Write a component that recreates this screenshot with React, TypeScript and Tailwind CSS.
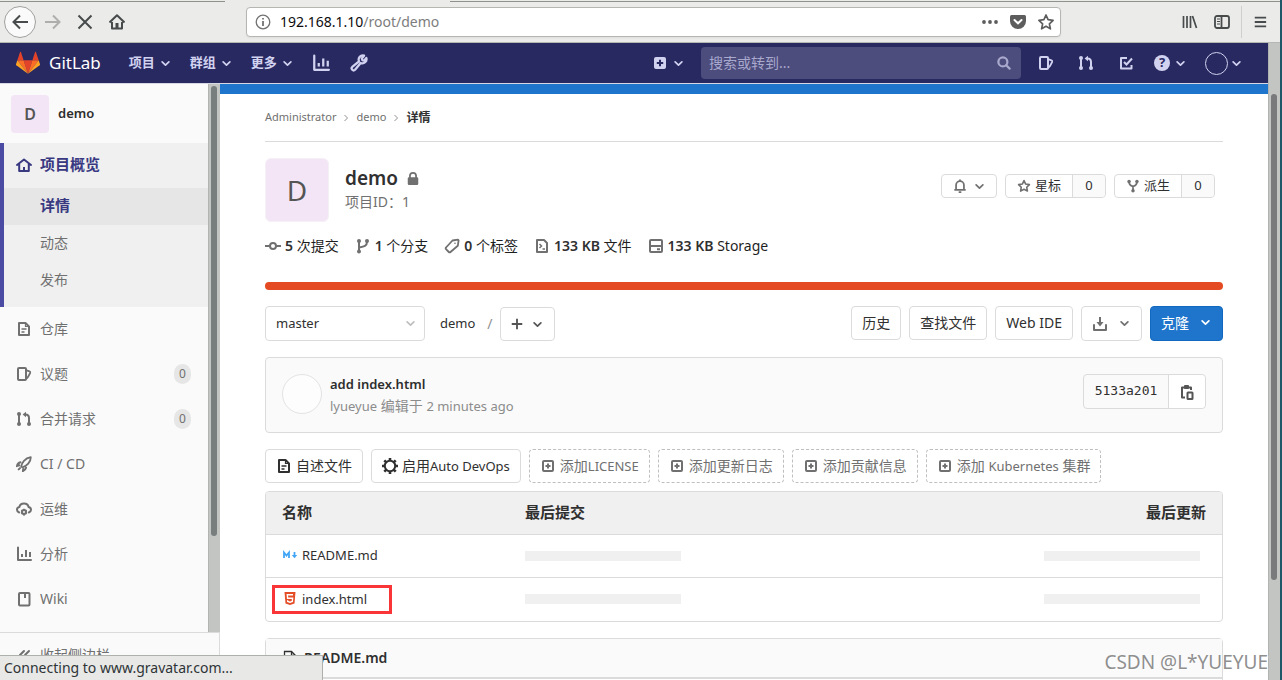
import React from "react";
import clsx from "clsx";

type IconProps = { className?: string };

const Svg = ({
  className = "w-4 h-4",
  width = 2,
  children,
}: IconProps & { width?: number; children: React.ReactNode }) => (
  <svg
    viewBox="0 0 16 16"
    className={clsx("shrink-0", className)}
    fill="none"
    stroke="currentColor"
    strokeWidth={width}
    aria-hidden="true"
  >
    {children}
  </svg>
);

const Chevron = ({ className = "w-[9px] h-[9px]" }: IconProps) => (
  <Svg className={className} width={3}>
    <path d="M2 5l6 6 6-6" strokeLinecap="round" strokeLinejoin="round" />
  </Svg>
);

const ChevronRight = () => (
  <Svg className="w-2 h-2 text-[#919191]">
    <path d="M5 2l6 6-6 6" />
  </Svg>
);

const HomeIcon = ({ className }: IconProps) => (
  <Svg className={className}>
    <path d="M1 8l7-5.5L15 8M3.2 7v7h9.6V7" strokeLinecap="round" strokeLinejoin="round" />
    <path d="M8 10v4" />
  </Svg>
);

const DocIcon = ({ className }: IconProps) => (
  <Svg className={className}>
    <path d="M3 2h6.5L13 5.500V14H3z" strokeLinejoin="round" />
    <path d="M5.500 8h5M5.500 11h3" strokeWidth="1.6" />
    <path d="M9.500 2v3.500H13" strokeWidth="1.2" />
  </Svg>
);

const IssuesIcon = ({ className }: IconProps) => (
  <Svg className={className}>
    <rect x="2" y="2" width="8" height="12" rx="1" />
    <path d="M10 4.2l3.4 1.1c.7.3 1 .9.8 1.5L12 11l-2 2" strokeWidth="1.8" />
  </Svg>
);

const MergeIcon = ({ className }: IconProps) => (
  <Svg className={className}>
    <path d="M3 3v10M13 13V7c0-2.5-1.2-3.5-3.5-3.5" />
    <path d="M10 .8v5.4L6.6 3.5z" fill="currentColor" stroke="none" />
    <g fill="currentColor" stroke="none">
      <circle cx="3" cy="3" r="2" />
      <circle cx="3" cy="13" r="2" />
      <circle cx="13" cy="13" r="2" />
    </g>
  </Svg>
);

const RocketIcon = ({ className }: IconProps) => (
  <Svg className={className}>
    <path
      d="M5.2 10.8C5.5 6.500 9 2.200 14.800 1.200c0 4.800-4 9-8.500 10.100z"
      strokeWidth="1.8"
      strokeLinejoin="round"
    />
    <path d="M4.500 6.300C2.600 6.600 1.400 8 1 10l2.400-.7M10 11.700c-.4 1.800-1.500 2.700-3 3.300l.2-2M2.700 13.400l1.300-1.300" strokeLinecap="round" />
  </Svg>
);

const CloudGearIcon = ({ className }: IconProps) => (
  <Svg className={className}>
    <path
      d="M3.200 11.500C1.800 11 1 10 1 8.700c0-1.500 1-2.600 2.400-2.800C3.900 3.600 5.700 2.500 8 2.500s4.100 1.300 4.600 3.400C14 6.200 15 7.200 15 8.700c0 1.300-.8 2.300-2.200 2.800"
      strokeLinecap="round"
    />
    <circle cx="8" cy="11" r="2" />
    <path d="M8 7.800v1.200M8 13v1.700M5.200 9.400l1 .6M9.800 12l1 .6M5.200 12.600l1-.6M9.800 10l1-.6" strokeWidth="1.5" />
  </Svg>
);

const ChartIcon = ({ className }: IconProps) => (
  <Svg className={className}>
    <path d="M2 1.500V14h13" strokeLinecap="round" strokeLinejoin="round" />
    <path d="M6 8v3M10 4v7M14 6v5" />
  </Svg>
);

const BookIcon = ({ className }: IconProps) => (
  <Svg className={className}>
    <rect x="3" y="2" width="10.500" height="12.500" rx="1" />
    <path d="M9 2.500v4.500" />
  </Svg>
);

const CollapseIcon = () => (
  <Svg>
    <path d="M8 4L4 8l4 4M13 4L9 8l4 4" strokeLinecap="round" strokeLinejoin="round" />
  </Svg>
);

const BranchIcon = ({ className }: IconProps) => (
  <Svg className={className}>
    <path d="M4 3v10M12 4c0 4-3 4.500-8 5.500" />
    <g fill="currentColor" stroke="none">
      <circle cx="4" cy="3" r="2" />
      <circle cx="4" cy="13.500" r="2" />
      <circle cx="12" cy="3" r="2" />
    </g>
  </Svg>
);

const ForkIcon = ({ className }: IconProps) => (
  <Svg className={className}>
    <path d="M3.500 3c0 3.500 1.500 4.500 4.500 5.500 3-1 4.500-2 4.500-5.500M8 8v5" />
    <g fill="currentColor" stroke="none">
      <circle cx="3.500" cy="2.800" r="2" />
      <circle cx="12.500" cy="2.800" r="2" />
      <circle cx="8" cy="13.500" r="2" />
    </g>
  </Svg>
);

const StarIcon = ({ className }: IconProps) => (
  <Svg className={className} width={1.8}>
    <path
      d="M8 1.800l1.900 4 4.300.6-3.100 3 .8 4.400L8 11.700l-3.900 2.100.8-4.400-3.100-3 4.300-.6z"
      strokeLinejoin="round"
    />
  </Svg>
);

const PlusBox = ({ className }: IconProps) => (
  <Svg className={className}>
    <rect x="3" y="3" width="10" height="10" rx="1" />
    <path d="M8 5.500v5M5.500 8h5" />
  </Svg>
);

const GearIcon = () => (
  <Svg>
    <circle cx="8" cy="8" r="5.200" strokeWidth="2" />
    <path
      d="M8 0v3M8 13v3M0 8h3M13 8h3M2.300 2.300l2 2M11.700 11.700l2 2M2.300 13.700l2-2M11.700 4.300l2-2"
      strokeWidth="2.600"
    />
  </Svg>
);

const GitLabLogo = () => (
  <svg viewBox="0 0 36 34" className="w-6 h-6 shrink-0" aria-hidden="true">
    <path fill="#e24329" d="M18 33L11.400 12.700h13.200z" />
    <path fill="#fc6d26" d="M18 33l-6.600-20.300H2z" />
    <path fill="#fca326" d="M2 12.700L0 18.900a1.400 1.400 0 0 0 .5 1.500L18 33z" />
    <path fill="#e24329" d="M2 12.700h9.400L7.400.6a.7.7 0 0 0-1.300 0z" />
    <path fill="#fc6d26" d="M18 33l6.600-20.300H34z" />
    <path fill="#fca326" d="M34 12.700l2 6.200a1.400 1.400 0 0 1-.5 1.500L18 33z" />
    <path fill="#e24329" d="M34 12.700h-9.400l4-12.100a.7.7 0 0 1 1.300 0z" />
  </svg>
);

const BrowserBar = () => (
  <div className="shrink-0 bg-[#ebebea] border-b border-[#b5b7b3]">
    <div className="flex h-[2px]">
      <div className="w-[225px] border-b border-[#8f918d]" />
      <div className="w-[225px]" />
      <div className="flex-1 border-b border-[#8f918d]" />
    </div>
    <div className="flex h-10 items-center pl-1 text-[#474b4b]">
      <button aria-label="Back" className="flex size-8 items-center justify-center rounded-full border border-[#a0a09e] bg-[#fafafa]">
        <Svg>
          <path d="M8 1.500L1.500 8 8 14.500M2 8h14" />
        </Svg>
      </button>
      <button aria-label="Forward" className="ml-[9px] text-[#aeaeac]">
        <Svg>
          <path d="M8 1.500L14.500 8 8 14.500M14 8H0" />
        </Svg>
      </button>
      <button aria-label="Stop" className="ml-4">
        <Svg>
          <path d="M1.500 1.500l13 13M14.500 1.500l-13 13" />
        </Svg>
      </button>
      <button aria-label="Home" className="ml-4">
        <Svg>
          <path d="M.500 8.500L8 1.200l7.500 7.300M3 8v6.500h10V8" strokeLinejoin="round" />
          <path d="M8 9v5" strokeWidth="3" />
        </Svg>
      </button>
      <div className="ml-[121px] flex h-[30px] flex-1 items-center rounded-sm border border-[#b5b5b2] bg-white pl-2 pr-1.5 shadow-xs">
        <Svg className="w-4 h-4 text-[#727272]" width={1.3}>
          <circle cx="8" cy="8" r="6.800" />
          <path d="M8 7v5M8 4v1.500" strokeWidth="1.800" />
        </Svg>
        <p className="ml-[9px] flex-1 text-sm text-[#7d7d7d]">
          <span className="text-[#0c0c0d]">192.168.1.10</span>/root/demo
        </p>
        <div className="flex items-center gap-3 text-[#5d5d5d]">
          <Svg>
            <g fill="currentColor" stroke="none">
              <circle cx="2" cy="8" r="1.900" />
              <circle cx="8" cy="8" r="1.900" />
              <circle cx="14" cy="8" r="1.900" />
            </g>
          </Svg>
          <Svg>
            <path d="M1.500 1h13q1.500 0 1.500 1.500V7a8 8 0 0 1-16 0V2.500Q0 1 1.500 1z" fill="currentColor" stroke="none" />
            <path d="M4.500 6L8 9.300 11.500 6" stroke="#fff" strokeLinecap="round" />
          </Svg>
          <Svg width={1.700}>
            <path d="M8 1l2.100 4.700 5 .6-3.700 3.500 1 5L8 12.300l-4.400 2.500 1-5L.9 6.300l5-.6z" strokeLinejoin="round" />
          </Svg>
        </div>
      </div>
      <div className="ml-[121px] flex items-center gap-4">
        <Svg>
          <path d="M1.500 2v12M5 2v12M8.500 2v12M10.500 2l4 12" strokeWidth="1.700" />
        </Svg>
        <Svg width={1.800}>
          <rect x="1" y="2" width="14" height="12" rx="2" />
          <path d="M7.500 2v12" />
          <path d="M3 5h3M3 7.500h3M3 10h3" strokeWidth="1" />
        </Svg>
      </div>
      <div className="ml-[11px] h-8 border-l border-[#cfcfcd]" />
      <button aria-label="Menu" className="ml-[11px] mr-[13px]">
        <Svg className="w-3.5 h-3.5" width={2.200}>
          <path d="M2 3h13M2 8h13M2 13h13" />
        </Svg>
      </button>
    </div>
  </div>
);

const Navbar = () => (
  <header className="flex h-[41px] shrink-0 items-center border-b border-[#d8d8e4] bg-[#292961] pl-4 pr-[27px] text-[#d1d1f0]">
    <a href="#" className="flex items-center gap-[9px] text-[17px] text-white">
      <GitLabLogo />
      GitLab
    </a>
    <nav className="ml-7 flex items-center gap-5 text-[13px] font-bold">
      {["项目", "群组", "更多"].map((label) => (
        <button key={label} className="flex items-center gap-1.5">
          {label}
          <Chevron />
        </button>
      ))}
      <a href="#" aria-label="分析">
        <ChartIcon className="w-[18px] h-[18px]" />
      </a>
      <a href="#" aria-label="管理">
        <Svg className="w-[18px] h-[18px]">
          <path
            d="M14.500 3.500a3.700 3.700 0 0 1-5 4.500L4.500 14a1.600 1.600 0 0 1-2.500-2.500L8 6.500a3.700 3.700 0 0 1 4.500-5L10.500 4l.5 1.500 1.500.5z"
            strokeLinejoin="round"
          />
        </Svg>
      </a>
    </nav>
    <button aria-label="新建" className="ml-auto mr-[18px] flex items-center gap-1.5">
      <Svg>
        <rect x="2" y="2" width="12" height="12" rx="2" fill="currentColor" stroke="none" />
        <path d="M8 4.800v6.400M4.800 8h6.400" stroke="#292961" />
      </Svg>
      <Chevron />
    </button>
    <div className="flex h-8 w-80 items-center rounded bg-[#4c4c7d] px-2">
      <input
        aria-label="搜索或转到..."
        placeholder="搜索或转到..."
        className="min-w-0 flex-1 bg-transparent text-sm placeholder:text-[#a9a9cd]"
      />
      <Svg className="w-[18px] h-[18px] text-[#a9a9cd]">
        <circle cx="7" cy="7" r="4" />
        <path d="M10 10l3 3" strokeLinecap="round" />
      </Svg>
    </div>
    <div className="ml-[17px] flex items-center gap-6">
      <IssuesIcon />
      <MergeIcon />
      <Svg>
        <path d="M9 3H3v10.500h10.500V10" strokeLinejoin="round" />
        <path d="M6 7l2.500 2.500L14 3.500" />
      </Svg>
    </div>
    <button aria-label="帮助" className="ml-5 flex items-center gap-1.5">
      <span className="flex size-4 items-center justify-center rounded-full bg-[#d1d1f0] text-[13px] font-bold text-[#292961]">
        ?
      </span>
      <Chevron />
    </button>
    <button aria-label="用户" className="ml-5 flex items-center gap-1">
      <span className="size-[23px] rounded-full border border-[#d1d1f0]" />
      <Chevron />
    </button>
  </header>
);

const sideItems = [
  { label: "仓库", Icon: DocIcon },
  { label: "议题", Icon: IssuesIcon, count: 0 },
  { label: "合并请求", Icon: MergeIcon, count: 0 },
  { label: "CI / CD", Icon: RocketIcon },
  { label: "运维", Icon: CloudGearIcon },
  { label: "分析", Icon: ChartIcon },
  { label: "Wiki", Icon: BookIcon },
];

const Sidebar = () => (
  <aside className="flex w-[220px] shrink-0 flex-col text-sm text-[#707070]">
    <div className="flex min-h-0 flex-1">
      <div className="min-w-0 flex-1 overflow-hidden bg-[#fafafa]">
        <a href="#" className="flex h-[59px] items-center gap-[9px] pl-[11px] text-[13px] font-semibold text-[#2e2e2e]">
          <span className="flex size-[38px] items-center justify-center rounded-sm bg-[#f3e5f5] text-base text-[#555]">
            D
          </span>
          demo
        </a>
        <nav>
          <div className="border-l-4 border-[#4b4ba3] bg-[#f0f0f0] pb-2">
            <a href="#" className="flex h-11 items-center gap-2 pl-3 text-[15px] font-bold text-[#393982]">
              <HomeIcon />
              项目概览
            </a>
            <a href="#" className="mt-px flex h-[37px] items-center bg-[#e6e6e6] pb-0.5 pl-9 text-[15px] font-bold text-[#393982]">
              详情
            </a>
            <a href="#" className="flex h-[37px] items-center pb-0.5 pl-9">动态</a>
            <a href="#" className="flex h-[37px] items-center pb-0.5 pl-9">发布</a>
          </div>
          {sideItems.map(({ label, Icon, count }) => (
            <a key={label} href="#" className="flex h-[45px] items-center gap-2 pb-0.5 pl-4 pr-[17px]">
              <Icon />
              <span className="flex-1">{label}</span>
              {count !== undefined && (
                <span className="flex h-5 w-[17px] items-center justify-center rounded-full bg-[#e6e6e6] text-xs">
                  {count}
                </span>
              )}
            </a>
          ))}
        </nav>
      </div>
      <div className="w-3 border-l border-[#b2b4b2] bg-[#c3c5c3] pl-0.5 pt-0.5">
        <div className="h-[450px] w-1.5 rounded-full bg-[#787d7d]" />
      </div>
    </div>
    <button className="flex h-12 shrink-0 items-center gap-2 border-r border-t border-[#dbdbdb] bg-[#fafafa] pb-1 pl-4">
      <CollapseIcon />
      收起侧边栏
    </button>
  </aside>
);

const countBox = "flex w-[33px] items-center justify-center rounded-r border-l border-[#dbdbdb] bg-[#fafafa]";

const ProjectHeader = () => (
  <div className="mt-4 flex items-start">
    <div className="flex size-16 items-center justify-center rounded-md border border-[#f5f0f6] bg-[#f3e5f5] text-[28px] text-[#555]">
      D
    </div>
    <div className="ml-4 pt-1.5">
      <h1 className="flex items-center gap-2 text-[19px] leading-7 font-semibold text-[#303030]">
        demo
        <Svg className="w-3.5 h-3.5 text-[#707070]">
          <rect x="2" y="7" width="12" height="9" rx="1.500" fill="currentColor" stroke="none" />
          <path d="M4.500 8V5.500a3.500 3.500 0 0 1 7 0V8" />
        </Svg>
      </h1>
      <p className="text-sm text-[#707070]">项目ID：1</p>
    </div>
    <div className="ml-auto mr-2 mt-4 flex gap-2 text-[13px] text-[#303030]">
      <button aria-label="通知" className="flex h-6 w-14 items-center justify-center gap-2 rounded border border-[#dbdbdb] text-[#707070]">
        <Svg className="w-3.5 h-3.5">
          <path d="M1.500 12.500h13M3.500 12V7a4.500 4.500 0 0 1 9 0v5M8 .5V2" />
          <path d="M6.500 15h3" />
        </Svg>
        <Chevron />
      </button>
      <div className="flex h-6 rounded border border-[#dbdbdb]">
        <button className="flex items-center gap-1 pl-[11px] pr-[11px]">
          <StarIcon className="w-3.5 h-3.5 text-[#707070]" />
          星标
        </button>
        <a href="#" className={countBox}>0</a>
      </div>
      <div className="flex h-6 rounded border border-[#dbdbdb]">
        <button className="flex items-center gap-1 pl-[11px] pr-[11px]">
          <ForkIcon className="w-3.5 h-3.5 text-[#707070]" />
          派生
        </button>
        <a href="#" className={countBox}>0</a>
      </div>
    </div>
  </div>
);

const CommitIcon = () => (
  <Svg>
    <circle cx="8" cy="8" r="3" />
    <path d="M0 8h5M11 8h5" />
  </Svg>
);

const TagIcon = () => (
  <Svg width={1.800}>
    <path d="M8.500 2.500l5.500-.8.600.6-.8 5.500L6.500 14a1.200 1.200 0 0 1-1.700 0L2 11.200a1.200 1.200 0 0 1 0-1.700z" strokeLinejoin="round" />
    <circle cx="11" cy="5.200" r=".8" fill="currentColor" stroke="none" />
  </Svg>
);

const CodeDocIcon = () => (
  <Svg>
    <path d="M3 2h7l3 3v9H3z" strokeLinejoin="round" />
    <path d="M5.500 6L7.500 8l-2 2M8.500 11h2.500" strokeWidth="1.500" />
  </Svg>
);

const DiskIcon = () => (
  <Svg>
    <rect x="2" y="2" width="12" height="12" rx="1" />
    <path d="M2 8h12M9 11.200h3" />
  </Svg>
);

const stats = [
  { Icon: CommitIcon, value: "5", label: "次提交" },
  { Icon: BranchIcon, value: "1", label: "个分支" },
  { Icon: TagIcon, value: "0", label: "个标签" },
  { Icon: CodeDocIcon, value: "133 KB", label: "文件" },
  { Icon: DiskIcon, value: "133 KB", label: "Storage" },
];

const Stats = () => (
  <ul className="mt-3.5 flex h-5 items-center gap-4 text-sm text-[#1f1f1f]">
    {stats.map(({ Icon, value, label }, i) => (
      <li key={i}>
        <a href="#" className="flex items-center gap-1">
          <span className="text-[#707070]"><Icon /></span>
          <span>
            <strong className="font-semibold text-[#303030]">{value}</strong> {label}
          </span>
        </a>
      </li>
    ))}
  </ul>
);

const outlineBtn = "flex items-center rounded border border-[#dbdbdb] bg-white px-2.5 whitespace-nowrap";

const TreeControls = () => (
  <div className="mt-4 flex h-[35px] items-start text-sm text-[#303030]">
    <div className="relative w-40">
      <select
        aria-label="分支"
        className="h-[35px] w-full appearance-none rounded border border-[#dbdbdb] bg-white px-2.5 text-[13px]"
      >
        <option>master</option>
      </select>
      <span className="pointer-events-none absolute right-2.5 top-[13px] text-[#bfbfbf]">
        <Chevron />
      </span>
    </div>
    <div className="ml-[15px] flex h-[35px] items-center gap-3">
      <a href="#" className="text-[13px]">demo</a>
      <span className="text-[#919191]">/</span>
    </div>
    <button aria-label="添加" className={clsx(outlineBtn, "ml-[7px] mt-px h-[34px] w-[55px] gap-2.5 text-[#555]")}>
      <Svg className="w-3 h-3" width={2.500}>
        <path d="M8 1v14M1 8h14" />
      </Svg>
      <Chevron />
    </button>
    <div className="ml-auto flex gap-2">
      <a href="#" className={clsx(outlineBtn, "h-[34px]")}>历史</a>
      <a href="#" className={clsx(outlineBtn, "h-[34px]")}>查找文件</a>
      <button className={clsx(outlineBtn, "h-[34px]")}>Web IDE</button>
      <button aria-label="下载" className={clsx(outlineBtn, "h-[35px] w-[61px] gap-3 text-[#707070]")}>
        <Svg>
          <path d="M2 9v5h12V9" strokeLinecap="round" strokeLinejoin="round" />
          <path d="M8 1v7" />
          <path d="M4.500 6h7L8 10.500z" fill="currentColor" stroke="none" />
        </Svg>
        <Chevron />
      </button>
      <button className="flex h-[35px] w-[73px] items-center gap-3 rounded border border-[#1068bf] bg-[#1f75cb] px-2.5 pb-0.5 text-white">
        克隆
        <Chevron />
      </button>
    </div>
  </div>
);

const LastCommit = () => (
  <div className="mt-4 flex h-[76px] items-start rounded border border-[#dbdbdb] bg-[#fafafa] p-4 text-sm">
    <div className="size-10 rounded-full border border-[#e3e3e3] bg-[#fdfdfd]" />
    <div className="ml-2 leading-[21px]">
      <a href="#" className="block text-[13px] font-semibold text-[#2e2e2e]">add index.html</a>
      <p className="text-[#8c8c8c]">
        <span className="text-[13px]">lyueyue</span> 编辑于 <span className="text-[13px]">2 minutes ago</span>
      </p>
    </div>
    <div className="ml-auto flex h-[35px] rounded border border-[#dbdbdb] text-[#303030]">
      <span className="flex w-[84px] items-center justify-center font-['DejaVu_Sans_Mono',monospace] text-[13px]">
        5133a201
      </span>
      <button aria-label="复制" className="flex w-[37px] items-center justify-center rounded-r border-l border-[#dbdbdb] bg-white text-[#555]">
        <Svg>
          <path d="M6 13.500H3v-10h9V6" strokeLinejoin="round" />
          <rect x="5" y="1" width="5" height="4" rx="1" fill="currentColor" stroke="none" />
          <rect x="8.500" y="8.500" width="5" height="6.500" rx=".5" />
        </Svg>
      </button>
    </div>
  </div>
);

const addLinks = [
  { text: "添加", latin: "LICENSE" },
  { text: "添加更新日志" },
  { text: "添加贡献信息" },
  { text: "添加 ", latin: "Kubernetes", rest: " 集群" },
];

const QuickButtons = () => (
  <div className="mt-4 flex flex-wrap gap-2 text-sm text-[#303030]">
    <a href="#" className={clsx(outlineBtn, "h-[34px] gap-1")}>
      <DocIcon />
      自述文件
    </a>
    <a href="#" className={clsx(outlineBtn, "h-[34px] gap-1")}>
      <GearIcon />
      <span>启用<span className="text-[13px]">Auto DevOps</span></span>
    </a>
    {addLinks.map(({ text, latin, rest }) => (
      <a
        key={latin ?? text}
        href="#"
        className="flex h-[34px] items-center gap-1 whitespace-nowrap rounded border border-dashed border-[#bfbfbf] px-2.5 text-[#707070]"
      >
        <PlusBox />
        <span>
          {text}
          {latin && <span className="text-[13px]">{latin}</span>}
          {rest}
        </span>
      </a>
    ))}
  </div>
);

const MarkdownIcon = () => (
  <svg viewBox="0 0 16 16" className="w-4 h-4 shrink-0" fill="none" stroke="#42a5f5" strokeWidth="1.800" aria-hidden="true">
    <path d="M2 10V4.500l2.500 3 2.500-3V10M12.500 4v4" />
    <path d="M9.800 7h5.400l-2.700 3.300z" fill="#42a5f5" stroke="none" />
  </svg>
);

const HtmlIcon = () => (
  <svg viewBox="0 0 16 16" className="w-4 h-4 shrink-0" aria-hidden="true">
    <path d="M2.500 1h11l-1 11.500L8 14l-4.500-1.500z" fill="#e44d26" />
    <path d="M11 3.800H5.300l.3 3.400h5l-.3 3.300L8 11.200l-2.300-.7-.1-1.200" fill="none" stroke="#fff" strokeWidth="1.400" />
  </svg>
);

const files = [
  { name: "README.md", Icon: MarkdownIcon },
  { name: "index.html", Icon: HtmlIcon, marked: true },
];

const FileTable = () => (
  <div className="mt-2 overflow-hidden rounded border border-[#dbdbdb] text-sm text-[#303030]">
    <table className="w-full table-fixed">
      <thead>
        <tr className="h-[42px] bg-[#f0f0f0] text-[15px]">
          <th className="w-[243px] px-4 text-left font-bold">名称</th>
          <th className="px-4 text-left font-bold">最后提交</th>
          <th className="w-[260px] px-4 text-right font-bold">最后更新</th>
        </tr>
      </thead>
      <tbody>
        {files.map(({ name, Icon, marked }) => (
          <tr key={name} className="h-[43px] border-t border-[#dbdbdb] last:h-11">
            <td className="relative px-4">
              <a href="#" className="flex items-center gap-1 text-[13px]">
                <Icon />
                {name}
              </a>
              {marked && <div className="absolute left-1.5 top-[7px] h-[29px] w-[120px] border-3 border-[#f93537]" />}
            </td>
            <td className="px-4">
              <div className="h-2.5 w-[156px] bg-[#f0f0f0]" />
            </td>
            <td className="pl-4 pr-[22px]">
              <div className="ml-auto h-2.5 w-[156px] bg-[#f0f0f0]" />
            </td>
          </tr>
        ))}
      </tbody>
    </table>
  </div>
);

const App = () => {
  return (
    <div className="relative flex h-screen flex-col overflow-hidden border-r-2 border-[#1f5868] bg-white font-['Noto_Sans','Noto_Sans_CJK_SC',sans-serif]">
      <BrowserBar />
      <div className="flex min-h-0 flex-1">
        <div className="flex min-w-0 flex-1 flex-col">
          <Navbar />
          <div className="flex min-h-0 flex-1">
            <Sidebar />
            <main className="min-w-0 flex-1 overflow-hidden border-t-10 border-[#1f75cb]">
              <div className="px-[45px]">
                {/* Breadcrumbs */}
                <nav className="flex h-12 items-center gap-1.5 border-b border-[#dbdbdb] text-[11px] text-[#707070]">
                  <a href="#">Administrator</a>
                  <ChevronRight />
                  <a href="#">demo</a>
                  <ChevronRight />
                  <a href="#" className="text-xs font-bold text-[#303030]">详情</a>
                </nav>
                <ProjectHeader />
                <Stats />
                {/* Language bar */}
                <div className="mt-[26px] h-2 rounded-full bg-[#e44b23]" />
                <TreeControls />
                <LastCommit />
                <QuickButtons />
                <FileTable />
                <section className="mt-4 rounded-t border border-[#dbdbdb]">
                  <h2 className="flex h-10 items-center gap-1 border-b-2 border-[#dbdbdb] bg-[#fafafa] px-4 text-sm font-semibold text-[#303030]">
                    <Svg width={1.300}>
                      <path d="M2.500 1.500h7l4 4v9h-11zM9.500 1.500v4h4" />
                    </Svg>
                    <span className="ml-0.5">README.md</span>
                  </h2>
                  <div className="h-20" />
                </section>
              </div>
            </main>
          </div>
        </div>
        {/* Page scrollbar */}
        <div className="w-3 border-l border-[#b2b4b2] bg-[#c3c5c3] pl-0.5 pt-[51px]">
          <div className="h-[486px] w-1.5 rounded-full bg-[#787a7b]" />
        </div>
      </div>
      <div className="absolute bottom-0 left-0 flex h-[25px] w-[323px] items-center border-r border-t border-[#aeb0ac] bg-[#e8e8e7] pl-1 text-sm text-[#2e3436]">
        Connecting to www.gravatar.com...
      </div>
      <div className="pointer-events-none absolute bottom-1 right-3 whitespace-nowrap text-[19px] text-[#8f8f8f] [text-shadow:1px_1px_0_#fff]">
        CSDN @L*YUEYUE
      </div>
    </div>
  );
};

export default App;
